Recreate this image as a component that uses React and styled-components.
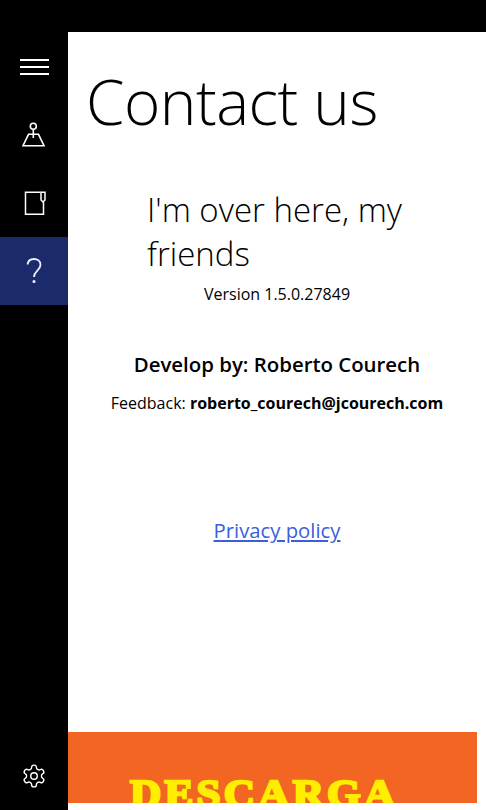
import styled, { createGlobalStyle } from 'styled-components';

const GlobalStyle = createGlobalStyle`
  html, body {
    margin: 0;
    padding: 0;
    height: 100%;
    background: #000;
    font-family: "Open Sans", "Noto Sans", sans-serif;
  }
`;

const Screen = styled.div`
  width: 486px;
  height: 810px;
  padding-top: 32px;
  box-sizing: border-box;
  display: flex;
  background: #000;
  overflow: hidden;
`;

const Sidebar = styled.nav`
  width: 68px;
  flex: none;
  display: flex;
  flex-direction: column;
  padding-top: 1px;
  box-sizing: border-box;
`;

const NavItem = styled.div`
  height: 68px;
  display: flex;
  align-items: center;
  justify-content: center;
  background: ${(p) => (p.$active ? '#1b2a6b' : 'transparent')};
  color: #fff;
  ${(p) => p.$bottom && 'margin-top: auto;'}
`;

const Main = styled.main`
  flex: 1;
  background: #fff;
  color: #000;
  display: flex;
  flex-direction: column;
  min-width: 0;
`;

const Title = styled.h1`
  margin: 25px 0 0 18px;
  font-size: 62px;
  line-height: 88px;
  font-weight: 300;
  letter-spacing: -0.5px;
`;

const Tagline = styled.h2`
  margin: 43px 0 0 79px;
  width: 290px;
  font-size: 33px;
  line-height: 44px;
  font-weight: 300;
`;

const Center = styled.p`
  margin: ${(p) => p.$top}px 0 0;
  text-align: center;
  font-size: ${(p) => p.$size}px;
  line-height: ${(p) => p.$line}px;
  font-weight: ${(p) => p.$weight || 400};
  white-space: nowrap;
`;

const Strong = styled.b`
  font-weight: 700;
`;

const Policy = styled.a`
  display: block;
  margin-top: 101px;
  text-align: center;
  font-size: 20.3px;
  line-height: 28px;
  color: #3a5fd9;
  text-decoration: underline;
`;

const Banner = styled.div`
  margin-top: auto;
  margin-bottom: 7px;
  width: 409px;
  height: 71px;
  background: #f26522;
  overflow: hidden;
  display: flex;
  padding-left: 62px;
  box-sizing: border-box;
`;

const BannerText = styled.span`
  margin-top: 42px;
  font-family: "Liberation Serif", serif;
  font-size: 40px;
  line-height: 40px;
  font-weight: 700;
  letter-spacing: 3px;
  color: #ffee00;
  -webkit-text-stroke: 2.5px #ffee00;
  transform: scaleX(1.08);
  transform-origin: left top;
`;

const MenuIcon = () => (
  <svg width="30" height="18" viewBox="0 0 30 18" fill="none" stroke="currentColor" strokeWidth="1.8">
    <path d="M1 2h29M1 9h29M1 16h29" />
  </svg>
);

const MapIcon = () => (
  <svg width="24" height="28" viewBox="0 0 24 28" fill="none" stroke="currentColor" strokeWidth="1.6">
    <circle cx="11.3" cy="5.200" r="3" />
    <path d="M11.300 8.200V17M6.500 13.300h10L22 24.700H1z" />
  </svg>
);

const NoteIcon = () => (
  <svg width="24" height="26" viewBox="0 0 24 26" fill="none" stroke="currentColor" strokeWidth="1.500">
    <path d="M18.500 2.300H3.500v22h18V12" />
    <path d="M19 2.300h4V10l-2 2-2-2z" />
  </svg>
);

const HelpIcon = () => (
  <svg width="16" height="27" viewBox="0 0 16 27" fill="none" stroke="#eef1ff" strokeWidth="1.800">
    <path d="M1.500 6.500C2 3 4.500 1 8 1c3.500 0 6.500 2.200 6.500 5.800 0 5.700-6.500 6-6.500 12.200" />
    <circle cx="8" cy="23.500" r="0.700" />
  </svg>
);

const GearIcon = () => (
  <svg width="26" height="26" viewBox="0 0 24 24" fill="none" stroke="currentColor" strokeWidth="1.300" strokeLinecap="round" strokeLinejoin="round">
    <path d="M12.220 2h-.44a2 2 0 0 0-2 2v.18a2 2 0 0 1-1 1.730l-.43.250a2 2 0 0 1-2 0l-.15-.08a2 2 0 0 0-2.730.730l-.22.380a2 2 0 0 0 .730 2.730l.15.100a2 2 0 0 1 1 1.720v.510a2 2 0 0 1-1 1.740l-.15.090a2 2 0 0 0-.730 2.730l.22.380a2 2 0 0 0 2.730.730l.15-.08a2 2 0 0 1 2 0l.43.250a2 2 0 0 1 1 1.730V20a2 2 0 0 0 2 2h.44a2 2 0 0 0 2-2v-.18a2 2 0 0 1 1-1.730l.43-.250a2 2 0 0 1 2 0l.15.080a2 2 0 0 0 2.730-.730l.22-.390a2 2 0 0 0-.730-2.730l-.15-.080a2 2 0 0 1-1-1.740v-.500a2 2 0 0 1 1-1.740l.15-.090a2 2 0 0 0 .730-2.730l-.22-.380a2 2 0 0 0-2.730-.730l-.15.080a2 2 0 0 1-2 0l-.43-.250a2 2 0 0 1-1-1.730V4a2 2 0 0 0-2-2z" />
    <circle cx="12" cy="12" r="3" />
  </svg>
);

export default function App() {
  return (
    <>
      <GlobalStyle />
      <Screen>
        <Sidebar>
          <NavItem><MenuIcon /></NavItem>
          <NavItem><MapIcon /></NavItem>
          <NavItem><NoteIcon /></NavItem>
          <NavItem $active><HelpIcon /></NavItem>
          <NavItem $bottom><GearIcon /></NavItem>
        </Sidebar>
        <Main>
          <Title>Contact us</Title>
          <Tagline>I'm over here, my friends</Tagline>
          <Center $top={6} $size={16} $line={24}>Version 1.5.0.27849</Center>
          <Center $top={44} $size={20.4} $line={28} $weight={600}>Develop by: Roberto Courech</Center>
          <Center $top={13} $size={16} $line={24}>
            Feedback: <Strong>roberto_courech@jcourech.com</Strong>
          </Center>
          <Policy>Privacy policy</Policy>
          <Banner>
            <BannerText>DESCARGA</BannerText>
          </Banner>
        </Main>
      </Screen>
    </>
  );
}
